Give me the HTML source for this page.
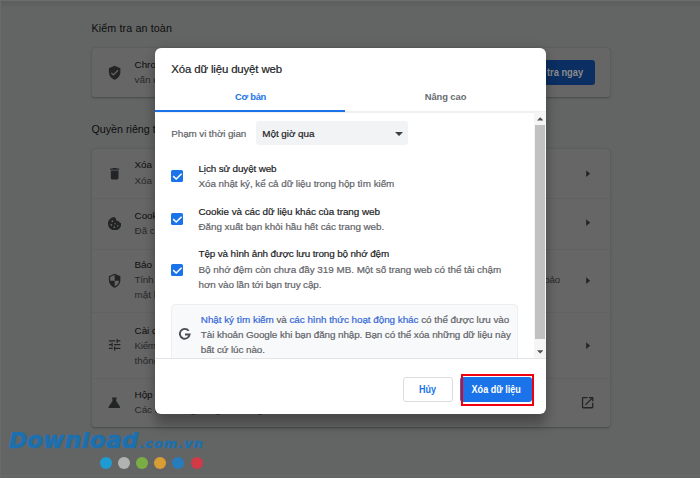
<!DOCTYPE html>
<html lang="vi">
<head>
<meta charset="utf-8">
<title>Xóa dữ liệu duyệt web</title>
<style>
*{box-sizing:border-box;margin:0;padding:0}
html,body{width:700px;height:478px;overflow:hidden}
body{background:#636565;font-family:"Liberation Sans",sans-serif;position:relative;color:#0d0d0e}
.abs{position:absolute;white-space:nowrap}
.h{font-size:10.7px;color:#0d0d0e;line-height:12px}
.card{position:absolute;left:92px;width:518px;background:#666666;border-radius:3px;box-shadow:0 0.8px 1.5px rgba(0,0,0,.17),0 0.8px 2.3px 0.8px rgba(0,0,0,.07)}
.sep{position:absolute;left:92px;width:518px;height:1px;background:#616161}
.bt{font-size:9.9px;line-height:12px;color:#0d0d0e}
.bs{font-size:9.9px;line-height:12px;color:#26282a}
svg.ic{position:absolute;fill:#232426}
.wm{font-family:"DejaVu Sans","Liberation Sans",sans-serif;font-weight:bold;font-style:oblique;color:#1c70b0;-webkit-text-stroke:0.7px #1c70b0}
.wm span{display:inline-block;vertical-align:top;position:relative}
.wD{font-size:21.6px;line-height:21.6px;top:-2.5px}
.wl{font-size:23.2px;line-height:23.2px;top:-3.8px;letter-spacing:0.25px}
.wc{font-size:13px;line-height:13px;top:4.8px;letter-spacing:0.95px;-webkit-text-stroke:0.4px #1c70b0;margin-left:0.5px}
.dot{position:absolute;top:456.7px;width:12px;height:12px;border-radius:50%}
/* dialog */
#dlg{position:absolute;left:155.5px;top:48.5px;width:0;height:0}
#panel{position:absolute;left:-0.5px;top:-0.5px;width:391px;height:366px;background:#fff;border-radius:6px;box-shadow:0 0 12px rgba(0,0,0,.12),0 12px 12px rgba(0,0,0,.24)}
.t{position:absolute;white-space:nowrap;font-size:9.9px;line-height:12px;-webkit-text-stroke:0.2px}
.p{color:#202124}
.s{color:#5f6368}
.l{color:#3367d6}
.cb{position:absolute;left:15.5px;width:12px;height:12px;border-radius:1.6px;background:#1a73e8}
.cb svg{position:absolute;left:0;top:0;width:12px;height:12px}
</style>
</head>
<body>
<!-- background page -->
<div style="position:absolute;left:0;top:0;width:700px;height:7px;background:linear-gradient(rgba(0,0,0,.07),rgba(0,0,0,.04) 70%,rgba(0,0,0,0))"></div>
<div style="position:absolute;left:0;top:0;width:700px;height:1px;background:#6b6d6d"></div>
<div style="position:absolute;left:0;top:0;width:1px;height:478px;background:#696b6b"></div>
<div style="position:absolute;left:0;top:475px;width:700px;height:1px;background:#686a6a"></div>
<div class="abs h" style="left:91.5px;top:22.4px;letter-spacing:0.13px">Kiểm tra an toàn</div>
<div class="card" style="top:48px;height:49px"></div>
<svg class="ic" style="left:106.9px;top:65px;width:15.3px;height:15.3px" viewBox="0 0 24 24"><path d="M12 1L3 5v6c0 5.55 3.84 10.74 9 12 5.160-1.26 9-6.45 9-12V5l-9-4zm-2 16l-4-4 1.410-1.410L10 14.170l6.590-6.590L18 9l-8 8z"/></svg>
<div class="abs bt" style="left:134.5px;top:58.9px">Chrome có thể giúp bạn giữ an toàn trước sự cố rò rỉ dữ liệu, tiện ích xấu và các</div>
<div class="abs bs" style="left:134.5px;top:73.9px">vấn đề khác</div>
<div class="abs" style="left:505px;top:60.4px;width:90px;height:24.2px;background:#0b2f62;border-radius:3px;color:#8c8c8c;font-size:10px;font-weight:bold;line-height:26.6px;text-align:right;padding-right:12.3px"><span style="display:inline-block;transform:scaleX(.93);transform-origin:right center">Kiểm tra ngay</span></div>

<div class="abs h" style="left:91.5px;top:123.3px">Quyền riêng tư và bảo mật</div>
<div class="card" style="top:149px;height:278px"></div>
<div class="sep" style="top:197.5px"></div>
<div class="sep" style="top:248.5px"></div>
<div class="sep" style="top:312px"></div>
<div class="sep" style="top:377.5px"></div>

<svg class="ic" style="left:106.6px;top:165.8px;width:15.3px;height:15.3px" viewBox="0 0 24 24"><path d="M6 19c0 1.100.9 2 2 2h8c1.100 0 2-.9 2-2V7H6v12zM19 4h-3.500l-1-1h-5l-1 1H5v2h14V4z"/></svg>
<div class="abs bt" style="left:134.5px;top:158.8px">Xóa dữ liệu duyệt web</div>
<div class="abs bs" style="left:134.5px;top:174.6px">Xóa lịch sử, cookie, bộ nhớ đệm và các dữ liệu khác</div>

<svg class="ic" style="left:107.8px;top:216.6px;width:13.4px;height:13.4px" viewBox="0 0 20 20"><path fill-rule="evenodd" d="M10 0C4.480 0 0 4.480 0 10s4.480 10 10 10 10-4.480 10-10c0-.4-.03-.8-.08-1.190a3.200 3.200 0 0 1-3.700-2.500 3.800 3.800 0 0 1-4.600-4.300A3.500 3.500 0 0 1 10 0zM6.500 5a1.300 1.300 0 1 1 0 2.600 1.300 1.300 0 0 1 0-2.600zM5 10.500a1.300 1.300 0 1 1 0 2.600 1.300 1.300 0 0 1 0-2.600zm5.500-1.500a1.100 1.100 0 1 1 0 2.200 1.100 1.100 0 0 1 0-2.200zm-1 5a1.300 1.300 0 1 1 0 2.600 1.300 1.300 0 0 1 0-2.600zm5-2a1.200 1.200 0 1 1 0 2.400 1.200 1.200 0 0 1 0-2.400z"/></svg>
<div class="abs bt" style="left:134.5px;top:210px">Cookie và các dữ liệu khác của trang web</div>
<div class="abs bs" style="left:134.5px;top:225.2px">Đã chặn cookie của bên thứ ba ở chế độ Ẩn danh</div>

<svg class="ic" style="left:107.2px;top:272.5px;width:15.3px;height:15.3px" viewBox="0 0 24 24"><path d="M12 1L3 5v6c0 5.550 3.840 10.740 9 12 5.160-1.260 9-6.450 9-12V5l-9-4zm0 10.990h7c-.530 4.120-3.280 7.790-7 8.940V12H5V6.300l7-3.110v8.800z"/></svg>
<div class="abs bt" style="left:134.5px;top:258.9px">Bảo mật</div>
<div class="abs bs" style="left:134.5px;top:274px;letter-spacing:-0.245px">Tính năng Duyệt web an toàn (bảo vệ bạn trước các trang web nguy hiểm) và các tùy chọn cài đặt bảo</div>
<div class="abs bs" style="left:134.5px;top:289px">mật khác</div>

<svg class="ic" style="left:107px;top:337.1px;width:15.3px;height:15.3px" viewBox="0 0 24 24"><path d="M3 17v2h6v-2H3zM3 5v2h10V5H3zm10 16v-2h8v-2h-8v-2h-2v6h2zM7 9v2H3v2h4v2h2V9H7zm14 4v-2H11v2h10zm-6-4h2V7h4V5h-4V3h-2v6z"/></svg>
<div class="abs bt" style="left:134.5px;top:324.5px">Cài đặt trang web</div>
<div class="abs bs" style="left:134.5px;top:339.6px;letter-spacing:-0.3px">Kiểm soát thông tin mà các trang web có thể sử dụng và hiển thị (vị trí, máy ảnh, cửa sổ bật lên và</div>
<div class="abs bs" style="left:134.5px;top:354.6px">thông tin khác)</div>

<svg class="ic" style="left:107.2px;top:394.6px;width:14.7px;height:14.7px" viewBox="0 0 24 24"><path d="M8 4h8v1.500l-1 1v3.500l6.300 9.400c.6 .9 0 1.700-.8 1.700H3.500c-.8 0-1.400-.8-.8-1.700L9 10V6.500l-1-1z"/></svg>
<div class="abs bt" style="left:134.5px;top:389px">Hộp cát về quyền riêng tư</div>
<div class="abs bs" style="left:134.5px;top:403.6px">Các tính năng dùng thử đang bật</div>

<!-- right arrows -->
<svg class="ic" style="left:579.5px;top:166px;width:15.3px;height:15.3px" viewBox="0 0 24 24"><path d="M9.700 6.800l6.100 5.200-6.100 5.200z"/></svg>
<svg class="ic" style="left:579.5px;top:215px;width:15.3px;height:15.3px" viewBox="0 0 24 24"><path d="M9.700 6.800l6.100 5.200-6.100 5.200z"/></svg>
<svg class="ic" style="left:579.5px;top:273px;width:15.3px;height:15.3px" viewBox="0 0 24 24"><path d="M9.700 6.800l6.100 5.200-6.100 5.200z"/></svg>
<svg class="ic" style="left:579.5px;top:338px;width:15.3px;height:15.3px" viewBox="0 0 24 24"><path d="M9.700 6.800l6.100 5.200-6.100 5.200z"/></svg>
<svg class="ic" style="left:579.9px;top:395.1px;width:15.3px;height:15.3px" viewBox="0 0 24 24"><path d="M19 19H5V5h7V3H5c-1.110 0-2 .9-2 2v14c0 1.100.890 2 2 2h14c1.100 0 2-.9 2-2v-7h-2v7zM14 3v2h3.590l-9.830 9.830 1.410 1.410L19 6.410V10h2V3h-7z"/></svg>

<!-- watermark -->
<div class="abs wm" style="left:9px;top:432px;height:17px;overflow:hidden;line-height:0"><span class="wD">D</span><span class="wl">ownload</span><span class="wc">.com.vn</span></div>
<div class="dot" style="left:99.5px;background:#1f9bd3"></div>
<div class="dot" style="left:117.6px;background:#b2b2b2"></div>
<div class="dot" style="left:136.1px;background:#7aae45"></div>
<div class="dot" style="left:154.2px;background:#d89d33"></div>
<div class="dot" style="left:172.3px;background:#277cbc"></div>
<div class="dot" style="left:190.7px;background:#d23a47"></div>

<!-- dialog -->
<div id="dlg">
  <div id="panel"></div>
  <div class="t p" style="left:15.8px;top:13.45px;font-size:11.4px;line-height:14px;letter-spacing:-0.133px">Xóa dữ liệu duyệt web</div>
  <!-- tabs -->
  <div class="t" style="left:0;top:42.1px;width:190px;text-align:center;color:#1a73e8;font-weight:bold;font-size:9.4px;letter-spacing:-0.25px;-webkit-text-stroke:0">Cơ bản</div>
  <div class="t" style="left:195px;top:42.1px;width:190px;text-align:center;color:#676c71;font-weight:bold;font-size:9.4px;letter-spacing:-0.08px;-webkit-text-stroke:0">Nâng cao</div>
  <div style="position:absolute;left:0;top:62.5px;width:390.5px;height:2px;background:#eeeff0"></div>
  <div style="position:absolute;left:-0.5px;top:61.3px;width:190px;height:1.8px;background:#1a73e8"></div>

  <!-- time range -->
  <div class="t s" style="left:15.8px;top:79.5px;letter-spacing:-0.106px">Phạm vi thời gian</div>
  <div style="position:absolute;left:100.8px;top:72.5px;width:151.7px;height:24px;background:#f1f3f4;border-radius:3px"></div>
  <div class="t p" style="left:106.8px;top:79.5px;letter-spacing:-0.05px">Một giờ qua</div>
  <svg style="position:absolute;left:239.4px;top:83px;width:8.1px;height:4.1px" viewBox="0 0 10 5"><path d="M0 0h10L5 5z" fill="#3c4043"/></svg>

  <!-- checkbox rows -->
  <div class="cb" style="top:121.3px"><svg viewBox="0 0 24 24"><path d="M4.300 12.300L10.400 17.900 21.200 7.400" fill="none" stroke="#fff" stroke-width="3"/></svg></div>
  <div class="t p" style="left:43px;top:114.5px;letter-spacing:-0.13px">Lịch sử duyệt web</div>
  <div class="t s" style="left:43px;top:129.5px;letter-spacing:-0.067px">Xóa nhật ký, kể cả dữ liệu trong hộp tìm kiếm</div>

  <div class="cb" style="top:164.3px"><svg viewBox="0 0 24 24"><path d="M4.300 12.300L10.400 17.900 21.200 7.400" fill="none" stroke="#fff" stroke-width="3"/></svg></div>
  <div class="t p" style="left:43px;top:157.5px;letter-spacing:-0.05px">Cookie và các dữ liệu khác của trang web</div>
  <div class="t s" style="left:43px;top:172.5px;letter-spacing:-0.05px">Đăng xuất bạn khỏi hầu hết các trang web.</div>

  <div class="cb" style="top:215.4px"><svg viewBox="0 0 24 24"><path d="M4.300 12.300L10.400 17.900 21.200 7.400" fill="none" stroke="#fff" stroke-width="3"/></svg></div>
  <div class="t p" style="left:43px;top:199.5px;letter-spacing:-0.13px">Tệp và hình ảnh được lưu trong bộ nhớ đệm</div>
  <div class="t s" style="left:43px;top:215.5px;letter-spacing:-0.03px">Bộ nhớ đệm còn chưa đầy 319 MB. Một số trang web có thể tải chậm</div>
  <div class="t s" style="left:43px;top:230.5px;letter-spacing:-0.11px">hơn vào lần tới bạn truy cập.</div>

  <!-- google info box -->
  <div style="position:absolute;left:15.8px;top:255.9px;width:346.5px;height:70px;background:#f8f9fa;border:1px solid #eceef0;border-radius:4px"></div>
  <svg style="position:absolute;left:22.2px;top:278.5px;width:13.6px;height:13.6px" viewBox="0 0 24 24"><path fill="none" stroke="#4a4d51" stroke-width="3.300" d="M18.900 6.600A8.700 8.700 0 1 0 20.620 13.200H12.300"/></svg>
  <div class="t s" style="left:45.3px;top:265.5px;letter-spacing:-0.04px"><span class="l">Nhật ký tìm kiếm</span> và <span class="l">các hình thức hoạt động khác</span> có thể được lưu vào</div>
  <div class="t s" style="left:45.3px;top:280.5px;letter-spacing:-0.093px">Tài khoản Google khi bạn đăng nhập. Bạn có thể xóa những dữ liệu này</div>
  <div class="t s" style="left:45.3px;top:295.5px;letter-spacing:-0.08px">bất cứ lúc nào.</div>

  <!-- footer (covers scroll overflow) -->
  <div style="position:absolute;left:-0.5px;top:309.5px;width:391px;height:50px;background:#fff;border-top:1px solid #e3e4e6"></div>

  <!-- scrollbar -->
  <div style="position:absolute;left:378.3px;top:63.3px;width:12.2px;height:246.2px;background:#f5f5f5"></div>
  <div style="position:absolute;left:379.2px;top:76.8px;width:9.9px;height:214.2px;background:#c1c1c1"></div>
  <svg style="position:absolute;left:381.2px;top:68.4px;width:6.4px;height:3.8px" viewBox="0 0 10 5"><path d="M0 5h10L5 0z" fill="#505050"/></svg>
  <svg style="position:absolute;left:381.2px;top:301.4px;width:6.4px;height:3.8px" viewBox="0 0 10 5"><path d="M0 0h10L5 5z" fill="#505050"/></svg>

  <!-- buttons -->
  <div style="position:absolute;left:247.1px;top:328.5px;width:50.7px;height:24.8px;border:1px solid #dadce0;border-radius:3px;color:#1a73e8;font-size:10px;font-weight:bold;line-height:24.8px;text-align:center"><span style="display:inline-block;transform:scaleX(.9)">Hủy</span></div>
  <div style="position:absolute;left:304.2px;top:328.5px;width:72.4px;height:24.8px;background:#1a73e8;border-radius:3px;color:#fff;font-size:10px;font-weight:bold;line-height:26.8px;text-align:center"><span style="display:inline-block;transform:scaleX(.905)">Xóa dữ liệu</span></div>
  <div style="position:absolute;left:305.8px;top:325px;width:73.1px;height:32.6px;border:2.4px solid #f0000f"></div>
</div>
</body>
</html>
